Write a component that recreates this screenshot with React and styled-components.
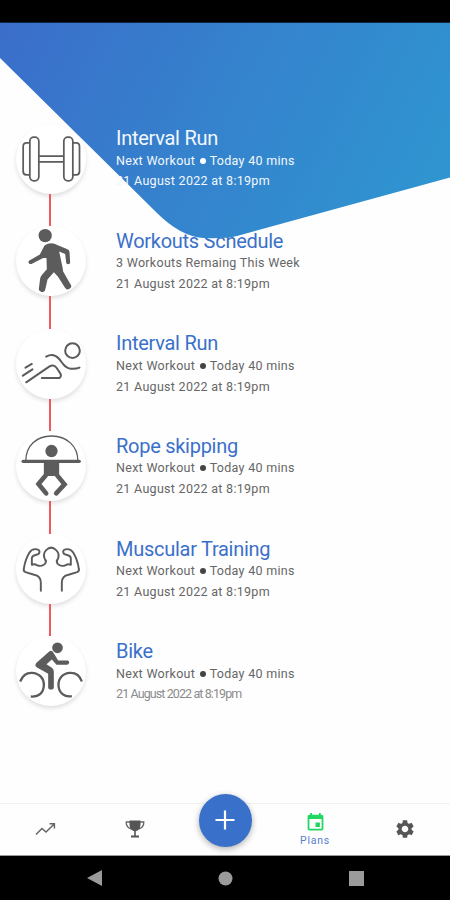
import React from "react";
import styled, { createGlobalStyle } from "styled-components";
import { MdSettings, MdEvent } from "react-icons/md";

const GlobalStyle = createGlobalStyle`
  * { box-sizing: border-box; }
  body { margin: 0; background: #fff; font-family: Roboto, sans-serif; }
`;

const Screen = styled.div`
  position: relative;
  width: 450px;
  height: 900px;
  overflow: hidden;
  display: flex;
  flex-direction: column;
  background: #fefefe;
`;

const StatusBar = styled.div`
  height: 23px;
  background: #000;
  border-bottom: 1px solid #12273f;
  flex: none;
`;

const Backdrop = styled.svg`
  position: absolute;
  left: 0;
  top: 23px;
  z-index: 1;
`;

const Timeline = styled.main`
  flex: 1;
  padding: 100.5px 0 0 15.5px;
`;

const Entry = styled.article`
  display: flex;
  height: 102.6px;
  gap: 30.5px;
  position: relative;
  z-index: ${(p) => (p.$raised ? 2 : 0)};
`;

const Rail = styled.div`
  width: 70px;
  display: flex;
  flex-direction: column;
  align-items: center;
`;

const Medallion = styled.div`
  width: 70px;
  height: 70px;
  flex: none;
  border-radius: 50%;
  background: #fff;
  box-shadow: 0 2.5px 4px rgba(0, 0, 0, 0.12);
  svg { display: block; width: 70px; height: 70px; }
`;

const Connector = styled.div`
  width: 2px;
  margin-right: 1px;
  flex: 1;
  background: #ee5a60;
`;

const Details = styled.div`
  display: flex;
  flex-direction: column;
  white-space: nowrap;
  color: ${(p) => (p.$raised ? "#f3f8fd" : "#666")};
`;

const Title = styled.h2`
  margin: 1.7px 0 0;
  font-size: 20px;
  line-height: 26px;
  font-weight: 400;
  letter-spacing: -0.27px;
  color: ${(p) => (p.$raised ? "#f3f8fd" : "#3b70c9")};
`;

const Line = styled.p`
  margin: 0;
  font-size: 12.5px;
  line-height: 20.8px;
  letter-spacing: ${(p) => (p.$tight ? -0.9 : 0.29)}px;
  color: ${(p) => (p.$tight ? "#8c8c8c" : "inherit")};
`;

const Lines = styled.div`
  margin-top: -0.6px;
`;

const Dot = styled.span`
  display: inline-block;
  width: 6px;
  height: 6px;
  margin: 0 1px 1px;
  border-radius: 50%;
  background: ${(p) => (p.$raised ? "#fff" : "#444")};
`;

const NavBar = styled.nav`
  height: 53px;
  flex: none;
  display: grid;
  grid-template-columns: repeat(5, 1fr);
  border-top: 1px solid #f1f1f1;
  border-bottom: 1px solid #999;
  background: #fefefe;
  color: #555;
`;

const NavItem = styled.div`
  display: flex;
  flex-direction: column;
  align-items: center;
  justify-content: center;
  padding-bottom: 1px;
  svg { display: block; }
`;

const NavLabel = styled.span`
  font-size: 10.5px;
  line-height: 12px;
  margin-top: 2px;
  letter-spacing: 0.75px;
  color: #5680cc;
`;

const AddButton = styled.div`
  width: 53px;
  height: 53px;
  margin-top: -18px;
  border-radius: 50%;
  background: #3870ca;
  box-shadow: 0 2px 6px rgba(0, 0, 0, 0.32);
  display: flex;
  align-items: center;
  justify-content: center;
`;

const SystemBar = styled.footer`
  height: 44px;
  flex: none;
  display: flex;
  align-items: center;
  justify-content: space-between;
  padding: 0 86.5px;
  background: #000;
  svg { display: block; }
`;

const INK = "#5c5c5c";

function Dumbbell() {
  return (
    <svg viewBox="46.5 40.5 210 210" fill="none" stroke={INK} strokeWidth="5.2">
      <rect x="88" y="80" width="27" height="131" rx="12" />
      <rect x="190" y="80" width="27" height="131" rx="12" />
      <path d="M88 97H78Q68 97 68 108V183Q68 193 78 193H88M217 97H227Q237 97 237 108V183Q237 193 227 193H217M115 137H190M115 154H190" />
    </svg>
  );
}

function Walker() {
  return (
    <svg viewBox="46.5 48.3 210 210" fill={INK}>
      <circle cx="134" cy="77" r="20" />
      <path d="M132 107Q151 94 172 106L201 118Q206 120 207 126L209 158Q209 163 203 163Q197 163 197 158L194 132L176 125L186 172L188 185L212 227Q214 233 206 237Q198 241 194 234L172 200L160 187L141 209L134 240Q132 248 123 246Q114 244 115 237L119 206Q120 200 124 195L139 178L138 144L128 144L93 162Q86 164 84 158Q83 153 88 151L118 134Z" />
    </svg>
  );
}

function Runner() {
  return (
    <svg viewBox="46.5 41.1 210 210" fill="none" stroke={INK} strokeWidth="6" strokeLinecap="round" strokeLinejoin="round">
      <circle cx="216" cy="106" r="22" />
      <path d="M137 124C150 117 163 117 174 129C188 144 191 158 210 160Q224 162 237 157" />
      <path d="M77 201L146 154Q158 146 167 156L178 172Q185 182 177 188H124M75 157L94 146M67 181L96 162" />
    </svg>
  );
}

function RopeSkipper() {
  return (
    <svg viewBox="46.5 33.9 210 210" fill={INK}>
      <circle cx="153" cy="94" r="18.5" />
      <path d="M76 123C76 78 108 49 153 49C199 49 232 79 232 123" fill="none" stroke={INK} strokeWidth="4" />
      <path d="M68 125H236" fill="none" stroke={INK} strokeWidth="10" strokeLinecap="round" />
      <path d="M130 125H176V169H130Z" />
      <path d="M136 167L114 193L137 221M170 167L192 194L167 221" fill="none" stroke={INK} strokeWidth="14" strokeLinecap="round" strokeLinejoin="miter" />
    </svg>
  );
}

function Muscles() {
  const arm = "M121 212V187Q121 168 101 164L75 156Q68 153 70 146Q74 118 87 97Q93 87 104 87Q117 87 117 95Q117 103 107 104Q95 107 94 114V134Q103 131 109 135Q120 140 130 134Q137 130 136 121";
  return (
    <svg viewBox="46.5 41.7 210 210" fill="none" stroke={INK} strokeWidth="5.8" strokeLinecap="round" strokeLinejoin="round">
      <path d={arm} />
      <path d={arm} transform="translate(305 0) scale(-1 1)" />
      <path d="M136 123Q124 103 137 90Q152 75 167 90Q181 103 169 123" />
    </svg>
  );
}

function Cyclist() {
  return (
    <svg viewBox="46.5 49.5 210 210" fill="none" stroke={INK}>
      <circle cx="171" cy="85" r="16" fill={INK} stroke="none" />
      <path d="M59 186Q70 159 94 160C117 161 131 177 130 198C129 219 116 233 91 231M244 186Q235 159 209 160C186 161 173 178 174 198C175 220 192 234 214 230" strokeWidth="7" />
      <path d="M147 95Q152 91 157 97L173 123H202Q207 125 206 130Q205 135 200 136H168L154 120L138 134L154 145Q160 149 160 157V203Q160 210 151 210Q143 210 143 203V163L111 145Q100 139 108 130Z" fill={INK} stroke="none" />
    </svg>
  );
}

const entries = [
  { title: "Interval Run", date: "21 August 2022 at 8:19pm", Icon: Dumbbell },
  { title: "Workouts Schedule", note: "3 Workouts Remaing This Week", date: "21 August 2022 at 8:19pm", Icon: Walker },
  { title: "Interval Run", date: "21 August 2022 at 8:19pm", Icon: Runner },
  { title: "Rope skipping", date: "21 August 2022 at 8:19pm", Icon: RopeSkipper },
  { title: "Muscular Training", date: "21 August 2022 at 8:19pm", Icon: Muscles },
  { title: "Bike", date: "21 August 2022 at 8:19pm", Icon: Cyclist },
];

export default function App() {
  return (
    <Screen>
      <GlobalStyle />
      <StatusBar />
      <Backdrop width="450" height="220" viewBox="0 23 450 220">
        <defs>
          <linearGradient id="sky" gradientUnits="userSpaceOnUse" x1="0" y1="30" x2="400" y2="240">
            <stop offset="0" stopColor="#3b6eca" />
            <stop offset="0.5" stopColor="#3582cd" />
            <stop offset="1" stopColor="#2f94d0" />
          </linearGradient>
        </defs>
        <path d="M0 23H450V177.5L237 236Q225 239 203 238Q180 236 157 213L0 58Z" fill="url(#sky)" />
      </Backdrop>
      <Timeline>
        {entries.map(({ title, note, date, Icon }, i) => {
          const raised = i === 0;
          const last = i === entries.length - 1;
          return (
            <Entry key={i} $raised={raised}>
              <Rail>
                <Medallion><Icon /></Medallion>
                {!last && <Connector />}
              </Rail>
              <Details $raised={raised}>
                <Title $raised={raised}>{title}</Title>
                <Lines>
                  <Line>{note || <>Next Workout <Dot $raised={raised} /> Today 40 mins</>}</Line>
                  <Line $tight={last}>{date}</Line>
                </Lines>
              </Details>
            </Entry>
          );
        })}
      </Timeline>
      <NavBar>
        <NavItem>
          <svg width="22" height="16" viewBox="0 0 22 16" fill="none" stroke="#666" strokeWidth="1.5">
            <path d="M2 13.5L8 7.5L12 11L20 3.2M15.5 2.8H20.4V7.5" />
          </svg>
        </NavItem>
        <NavItem>
          <svg width="20" height="18" viewBox="0 0 20 18">
            <path d="M5 2H1.2Q1 7.5 6.4 9M15 2H18.8Q19 7.5 13.6 9" fill="none" stroke="#666" strokeWidth="1.3" />
            <path d="M4.5 0.5H15.5V4C15.5 8.3 13.5 10.5 10.8 11.2V15.5H14V17.5H6V15.5H9.2V11.2C6.5 10.5 4.5 8.3 4.5 4Z" fill="#555" />
          </svg>
        </NavItem>
        <NavItem>
          <AddButton>
            <svg width="22" height="22" viewBox="0 0 22 22" stroke="#fff" strokeWidth="2.2">
              <path d="M1.5 11H20.5M11 1.5V20.5" />
            </svg>
          </AddButton>
        </NavItem>
        <NavItem>
          <MdEvent size={21} color="#20d760" />
          <NavLabel>Plans</NavLabel>
        </NavItem>
        <NavItem>
          <MdSettings size={22} />
        </NavItem>
      </NavBar>
      <SystemBar>
        <svg width="15" height="16" viewBox="0 0 15 16"><path d="M0 8L15 0V16Z" fill="#9b9b9b" /></svg>
        <svg width="15" height="15" viewBox="0 0 15 15"><circle cx="7.5" cy="7.5" r="7" fill="#9b9b9b" /></svg>
        <svg width="15" height="15" viewBox="0 0 15 15"><path d="M0 0H15V15H0Z" fill="#9b9b9b" /></svg>
      </SystemBar>
    </Screen>
  );
}
